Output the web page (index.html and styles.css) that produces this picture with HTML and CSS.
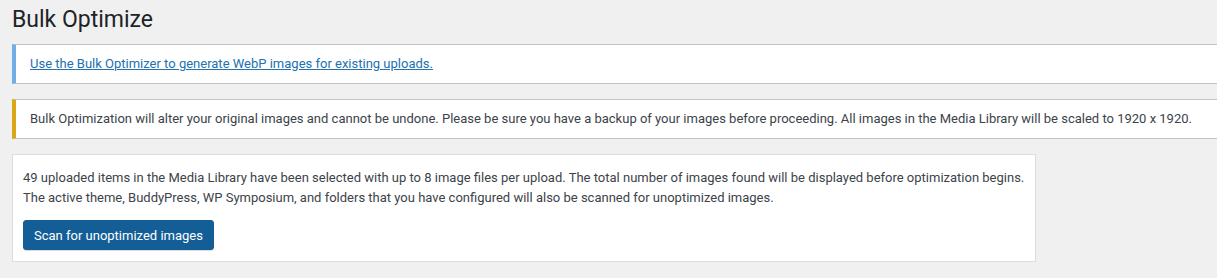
FILE: index.html
```html
<!DOCTYPE html>
<html lang="en">
<head>
    <meta charset="UTF-8">
    <meta name="viewport" content="width=device-width, initial-scale=1.0">
    <title>Bulk Optimize</title>
    <link rel="stylesheet" href="styles.css">
</head>
<body>
    <div class="wrap">
        <h1>Bulk Optimize</h1>

        <div class="notice notice-info">
            <p><a href="#">Use the Bulk Optimizer to generate WebP images for existing uploads.</a></p>
        </div>

        <div class="notice notice-warning">
            <p>Bulk Optimization will alter your original images and cannot be undone. Please be sure you have a backup of your images before proceeding. All images in the Media Library will be scaled to 1920 x 1920.</p>
        </div>

        <div class="bulk-box">
            <p>49 uploaded items in the Media Library have been selected with up to 8 image files per upload. The total number of images found will be displayed before optimization begins.<br>
            The active theme, BuddyPress, WP Symposium, and folders that you have configured will also be scanned for unoptimized images.</p>
            <button type="button" class="scan-button">Scan for unoptimized images</button>
        </div>
    </div>
</body>
</html>
```

FILE: styles.css
```css
html, body {
    overflow: hidden;
}

body {
    font-family: Roboto, 'Noto Sans', sans-serif;
    font-size: 13px;
    color: #3c434a;
    background-color: #f0f0f1;
    margin: 0;
}

.wrap {
    margin: 0 -20px 0 12px;
}

h1 {
    font-size: 23px;
    font-weight: 400;
    line-height: 30px;
    color: #1d2327;
    margin: 0;
    padding: 5px 0 9px;
}

.notice {
    background-color: #ffffff;
    border: 1px solid #c3c4c7;
    border-left-width: 4px;
    padding: 0 12px 0 14px;
    margin-bottom: 15px;
}

.notice p {
    margin: 9px 0;
    line-height: 20px;
}

.notice-info {
    border-left-color: #72aee6;
}

.notice-warning {
    border-left-color: #dba617;
}

.notice a {
    color: #2271b1;
    text-decoration: underline;
}

.bulk-box {
    background-color: #ffffff;
    border: 1px solid #dcdcde;
    width: 1002px;
    margin-top: 1px;
    padding: 13px 10px 11px;
}

.bulk-box p {
    margin: 0;
    line-height: 20px;
}

.scan-button {
    display: block;
    margin-top: 12px;
    height: 30px;
    padding: 0 10px;
    font-family: inherit;
    font-size: 13px;
    color: #ffffff;
    background-color: #135e96;
    border: 1px solid #135e96;
    border-radius: 3px;
    box-shadow: 0 1px 0 #dcdcde;
    cursor: pointer;
}
```
